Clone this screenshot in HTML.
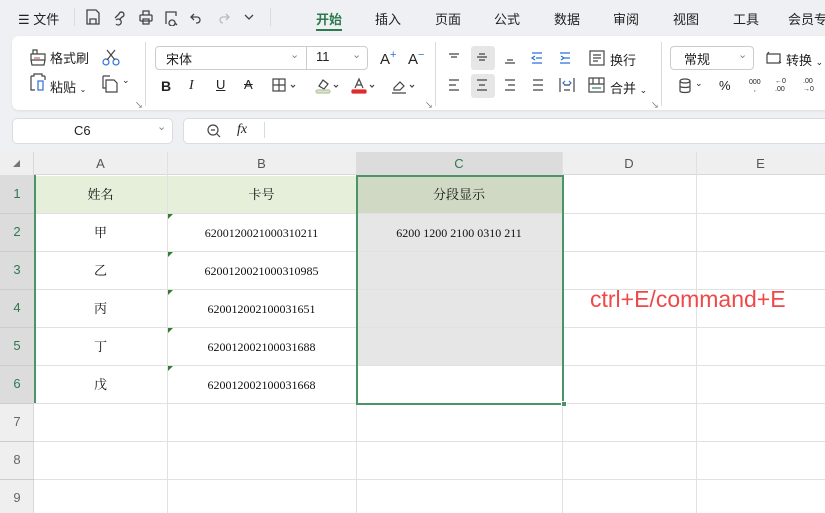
<!DOCTYPE html>
<html><head><meta charset="utf-8">
<style>
*{margin:0;padding:0;box-sizing:border-box}
body{width:825px;height:513px;overflow:hidden;background:#eef0f3;font-family:"Liberation Sans","Noto Sans CJK SC",sans-serif;position:relative;color:#222}
.a{position:absolute;white-space:nowrap}
.t{font-size:13px}
.ic{position:absolute}
.sep{position:absolute;width:1px;background:#d8dadd}
.g{position:absolute;background:#e1e1e1}
.cell{position:absolute;font-family:"Liberation Serif","Noto Serif CJK SC",serif;font-size:12px;text-align:center;color:#111}
.rh{position:absolute;left:0;width:34px;text-align:center;font-size:13px;color:#666}
.ch{position:absolute;top:152px;height:23px;line-height:23px;text-align:center;font-size:13px;color:#555}
.tri{position:absolute;width:0;height:0;border-top:5px solid #2e7d32;border-right:5px solid transparent}
</style></head><body>
<div class="a t" style="left:18px;top:9px;font-size:13px">☰ 文件</div>
<div class="sep" style="left:74px;top:8px;height:18px"></div>
<svg class="ic" style="left:84px;top:8px" width="180" height="18" fill="none" stroke="#444" stroke-width="1.3">
<path d="M3 2h9l3 3v11H3z M6 16v-5h6v5"/>
<path d="M32 12a3 3 0 1 1 0 4 M31 10l4-4a2.5 2.5 0 1 1 3 3l-3 3"/>
<rect x="56" y="7" width="12" height="6" rx="1"/><path d="M59 7V3h6v4 M59 11h6v5h-6z"/>
<path d="M82 16V4h10v4 M88 12a3 3 0 1 0 .1 0 M91 15l2 2"/>
<path d="M110 6l-3 3 3 3 M107 9h6a3 3 0 0 1 0 6h-1"/>
<path d="M142 6l3 3-3 3 M145 9h-6a3 3 0 0 0 0 6" stroke="#bbb"/>
<path d="M161 7l4 4 4-4"/>
</svg>
<div class="sep" style="left:270px;top:8px;height:18px"></div>
<div class="a t" style="left:316px;top:9px;color:#2d7a4f;font-weight:bold">开始</div>
<div class="a" style="left:316px;top:29px;width:26px;height:2px;background:#2d7a4f"></div>
<div class="a t" style="left:375px;top:9px">插入</div>
<div class="a t" style="left:435px;top:9px">页面</div>
<div class="a t" style="left:494px;top:9px">公式</div>
<div class="a t" style="left:554px;top:9px">数据</div>
<div class="a t" style="left:613px;top:9px">审阅</div>
<div class="a t" style="left:673px;top:9px">视图</div>
<div class="a t" style="left:733px;top:9px">工具</div>
<div class="a t" style="left:788px;top:9px">会员专</div>
<div class="a" style="left:12px;top:36px;width:830px;height:74px;background:#fff;border-radius:7px;box-shadow:0 1px 2px rgba(0,0,0,.08)"></div>
<svg class="ic" style="left:28px;top:46px" width="120" height="50" fill="none" stroke="#444" stroke-width="1.2">
<path d="M3 14h14v-6H3z M5 8V4h4v4 M3 14l1 5h12l1-5" /><path d="M6 12h6" stroke="#c66"/>
<circle cx="78" cy="16" r="3" stroke="#2b6fd6"/><circle cx="88" cy="16" r="3" stroke="#2b6fd6"/><path d="M79 14l8-10 M87 14l-8-10"/>
<path d="M3 30h3v-2h8v2h3 M3 30v14h4 M17 30v4" /><rect x="10" y="35" width="5" height="9" stroke="#2b6fd6"/>
<path d="M75 30h7 M75 30v12h3 M78 34h8l3 3v9h-11z"/>
</svg>
<div class="a t" style="left:50px;top:48px">格式刷</div>
<div class="a t" style="left:50px;top:77px">粘贴 <span style="font-size:8px">⌄</span></div>
<div class="a" style="left:122px;top:75px;font-size:9px">⌄</div>
<div class="a" style="left:135px;top:100px;font-size:8px;color:#666">↘</div>
<div class="sep" style="left:145px;top:42px;height:64px"></div>
<div class="a" style="left:155px;top:46px;width:213px;height:24px;border:1px solid #ccc;border-radius:4px"></div>
<div class="sep" style="left:306px;top:47px;height:22px;background:#ccc"></div>
<div class="a t" style="left:166px;top:49px">宋体</div>
<div class="a" style="left:290px;top:48px;font-size:11px;color:#888">⌄</div>
<div class="a t" style="left:316px;top:49px">11</div>
<div class="a" style="left:352px;top:48px;font-size:11px;color:#888">⌄</div>
<div class="a" style="left:380px;top:49px;font-size:15px">A<sup style="color:#2b6fd6;font-size:11px">+</sup></div>
<div class="a" style="left:408px;top:49px;font-size:15px">A<sup style="color:#2b6fd6;font-size:11px">−</sup></div>
<div class="a" style="left:161px;top:78px;font-size:14px;font-weight:bold">B</div>
<div class="a" style="left:189px;top:78px;font-size:14px;font-style:italic;font-family:'Liberation Serif',serif">I</div>
<div class="a" style="left:216px;top:77px;font-size:13px;text-decoration:underline">U</div>
<div class="a" style="left:244px;top:77px;font-size:13px;text-decoration:line-through">A</div>
<svg class="ic" style="left:272px;top:76px" width="160" height="20" fill="none" stroke="#444" stroke-width="1.2">
<rect x="1" y="3" width="12" height="12"/><path d="M7 3v12 M1 9h12"/><path d="M19 9l2 2 2-2"/>
<path d="M47 10l4-6 5 4-4 5z"/><rect x="44" y="14" width="14" height="3" rx="1.5" fill="#d9e6cc" stroke="#b5c7a3"/><path d="M62 9l2 2 2-2"/>
<path d="M83 12l4-9 4 9 M85 9h4"/><rect x="80" y="14" width="14" height="3" rx="1" fill="#e02c2c" stroke="#e02c2c"/><path d="M98 9l2 2 2-2"/>
<path d="M122 12l6-6 4 4-4 4h-6z M120 17h14"/><path d="M138 9l2 2 2-2"/>
</svg>
<div class="a" style="left:425px;top:100px;font-size:8px;color:#666">↘</div>
<div class="sep" style="left:435px;top:42px;height:64px"></div>
<div class="a" style="left:471px;top:46px;width:24px;height:24px;background:#e6e6e6;border-radius:3px"></div>
<div class="a" style="left:471px;top:74px;width:24px;height:24px;background:#e6e6e6;border-radius:3px"></div>
<svg class="ic" style="left:444px;top:48px" width="200" height="50" fill="none" stroke="#444" stroke-width="1.2">
<path d="M5 6h10 M7 9h6"/><path d="M33 9h10 M35 12h6 M35 6h6"/><path d="M61 15h10 M63 12h6"/>
<path d="M88 5h10 M92 10h6 M88 15h10 M91 8l-3 2 3 2" stroke="#2b6fd6"/>
<path d="M116 5h10 M120 10h6 M116 15h10 M117 8l3 2-3 2" stroke="#2b6fd6"/>
<rect x="146" y="3" width="14" height="14"/><path d="M149 7h8 M149 10h8 M149 13h5"/>
<path d="M5 32h10 M5 37h7 M5 42h10"/><path d="M33 32h10 M35 37h6 M33 42h10"/><path d="M61 32h10 M64 37h7 M61 42h10"/><path d="M89 32h10 M89 37h10 M89 42h10"/>
<path d="M116 30v14 M130 30v14 M120 42h6 M120 37h6"/><path d="M121 33l-2 2 2 2 M125 33l2 2-2 2" stroke="#2b6fd6"/>
<rect x="145" y="30" width="15" height="14"/><path d="M145 36h15 M149 30v6 M155 30v6"/><path d="M148 40h9" stroke="#2d7a4f"/>
</svg>
<div class="a t" style="left:610px;top:50px">换行</div>
<div class="a t" style="left:610px;top:78px">合并 <span style="font-size:9px">⌄</span></div>
<div class="a" style="left:651px;top:100px;font-size:8px;color:#666">↘</div>
<div class="sep" style="left:661px;top:42px;height:64px"></div>
<div class="a" style="left:670px;top:46px;width:84px;height:24px;border:1px solid #ccc;border-radius:4px"></div>
<div class="a t" style="left:684px;top:49px">常规</div>
<div class="a" style="left:738px;top:48px;font-size:11px;color:#888">⌄</div>
<svg class="ic" style="left:764px;top:49px" width="20" height="18" fill="none" stroke="#444" stroke-width="1.2"><path d="M3 5h13v9 M17 14l-2-2 M3 5l2-2 M16 14H3V5"/></svg>
<div class="a t" style="left:786px;top:50px">转换 <span style="font-size:9px">⌄</span></div>
<svg class="ic" style="left:678px;top:78px" width="15" height="16" fill="none" stroke="#444" stroke-width="1.2"><ellipse cx="7" cy="3" rx="5" ry="2"/><path d="M2 3v10c0 2 10 2 10 0V3 M2 8c0 2 10 2 10 0"/></svg>
<div class="a" style="left:695px;top:78px;font-size:9px">⌄</div>
<div class="a" style="left:719px;top:78px;font-size:13px">%</div>
<div class="a" style="left:749px;top:79px;font-size:7px;line-height:7px;text-align:center">000<br>,</div>
<div class="a" style="left:775px;top:78px;font-size:7px;line-height:8px">←0<br>.00</div>
<div class="a" style="left:803px;top:78px;font-size:7px;line-height:8px">.00<br>→0</div>
<div class="a" style="left:12px;top:118px;width:161px;height:26px;background:#fff;border-radius:5px;border:1px solid #dcdcdc"></div>
<div class="a t" style="left:74px;top:123px">C6</div>
<div class="a" style="left:157px;top:120px;font-size:11px;color:#888">⌄</div>
<div class="a" style="left:183px;top:118px;width:660px;height:26px;background:#fff;border-radius:5px;border:1px solid #dcdcdc"></div>
<svg class="ic" style="left:206px;top:123px" width="16" height="16" fill="none" stroke="#444" stroke-width="1.2"><circle cx="7" cy="7" r="5"/><path d="M5 7h4 M11 11l3 3"/></svg>
<div class="a" style="left:237px;top:122px;font-size:14px;font-style:italic;font-family:'Liberation Serif',serif">fx</div>
<div class="sep" style="left:264px;top:122px;height:16px"></div>
<div class="a" style="left:0;top:152px;width:825px;height:361px;background:#fff"></div>
<div class="a" style="left:0;top:152px;width:825px;height:23px;background:#efefef;border-bottom:1px solid #d8d8d8"></div>
<div class="a" style="left:0;top:152px;width:34px;height:361px;background:#efefef;border-right:1px solid #d8d8d8"></div>
<div class="a" style="left:0;top:175px;width:34px;height:228px;background:#dcdcdc"></div>
<div class="a" style="left:356px;top:152px;width:206px;height:23px;background:#dcdcdc"></div>
<div class="a" style="left:13px;top:160px;width:0;height:0;border-left:7px solid transparent;border-bottom:7px solid #777"></div>
<div class="a" style="left:35px;top:176px;width:321px;height:37px;background:#e5efd9"></div>
<div class="a" style="left:357px;top:176px;width:205px;height:37px;background:#cfd9c3"></div>
<div class="a" style="left:357px;top:214px;width:205px;height:151px;background:#e6e6e6"></div>
<div class="g" style="left:167px;top:152px;width:1px;height:361px"></div>
<div class="g" style="left:356px;top:175px;width:1px;height:338px"></div>
<div class="g" style="left:562px;top:152px;width:1px;height:361px"></div>
<div class="g" style="left:696px;top:152px;width:1px;height:361px"></div>
<div class="g" style="left:34px;top:213px;width:791px;height:1px"></div>
<div class="g" style="left:34px;top:251px;width:791px;height:1px"></div>
<div class="g" style="left:34px;top:289px;width:791px;height:1px"></div>
<div class="g" style="left:34px;top:327px;width:791px;height:1px"></div>
<div class="g" style="left:34px;top:365px;width:791px;height:1px"></div>
<div class="g" style="left:34px;top:403px;width:791px;height:1px"></div>
<div class="g" style="left:34px;top:441px;width:791px;height:1px"></div>
<div class="g" style="left:34px;top:479px;width:791px;height:1px"></div>
<div class="g" style="left:0;top:213px;width:34px;height:1px;background:#ccc"></div>
<div class="g" style="left:0;top:251px;width:34px;height:1px;background:#ccc"></div>
<div class="g" style="left:0;top:289px;width:34px;height:1px;background:#ccc"></div>
<div class="g" style="left:0;top:327px;width:34px;height:1px;background:#ccc"></div>
<div class="g" style="left:0;top:365px;width:34px;height:1px;background:#ccc"></div>
<div class="g" style="left:0;top:441px;width:34px;height:1px;background:#ccc"></div>
<div class="g" style="left:0;top:479px;width:34px;height:1px;background:#ccc"></div>
<div class="g" style="left:0;top:403px;width:34px;height:1px;background:#ccc"></div>
<div class="a" style="left:34px;top:175px;width:2px;height:228px;background:#4a9467"></div>
<div class="ch" style="left:34px;width:133px">A</div>
<div class="ch" style="left:167px;width:189px">B</div>
<div class="ch" style="left:356px;width:206px;color:#2d7a4f">C</div>
<div class="ch" style="left:562px;width:134px">D</div>
<div class="ch" style="left:696px;width:129px">E</div>
<div class="rh" style="top:186px;color:#2d7a4f">1</div>
<div class="rh" style="top:224px;color:#2d7a4f">2</div>
<div class="rh" style="top:262px;color:#2d7a4f">3</div>
<div class="rh" style="top:300px;color:#2d7a4f">4</div>
<div class="rh" style="top:338px;color:#2d7a4f">5</div>
<div class="rh" style="top:376px;color:#2d7a4f">6</div>
<div class="rh" style="top:414px">7</div>
<div class="rh" style="top:452px">8</div>
<div class="rh" style="top:490px">9</div>
<div class="cell" style="left:34px;width:133px;top:184px;font-size:13px">姓名</div>
<div class="cell" style="left:167px;width:189px;top:184px;font-size:13px">卡号</div>
<div class="cell" style="left:356px;width:206px;top:184px;font-size:13px">分段显示</div>
<div class="cell" style="left:34px;width:133px;top:222px;font-size:13px">甲</div>
<div class="cell" style="left:34px;width:133px;top:260px;font-size:13px">乙</div>
<div class="cell" style="left:34px;width:133px;top:298px;font-size:13px">丙</div>
<div class="cell" style="left:34px;width:133px;top:336px;font-size:13px">丁</div>
<div class="cell" style="left:34px;width:133px;top:374px;font-size:13px">戊</div>
<div class="cell" style="left:167px;width:189px;top:226px">6200120021000310211</div>
<div class="cell" style="left:167px;width:189px;top:264px">6200120021000310985</div>
<div class="cell" style="left:167px;width:189px;top:302px">620012002100031651</div>
<div class="cell" style="left:167px;width:189px;top:340px">620012002100031688</div>
<div class="cell" style="left:167px;width:189px;top:378px">620012002100031668</div>
<div class="cell" style="left:356px;width:206px;top:226px">6200 1200 2100 0310 211</div>
<div class="tri" style="left:168px;top:214px"></div>
<div class="tri" style="left:168px;top:252px"></div>
<div class="tri" style="left:168px;top:290px"></div>
<div class="tri" style="left:168px;top:328px"></div>
<div class="tri" style="left:168px;top:366px"></div>
<div class="a" style="left:356px;top:175px;width:208px;height:230px;border:2px solid #4a9467"></div>
<div class="a" style="left:561px;top:401px;width:6px;height:6px;background:#4a9467;border:1px solid #fff"></div>
<div class="a" style="left:590px;top:286px;font-size:23px;color:#f04848;font-family:'Liberation Sans',sans-serif">ctrl+E/command+E</div>
</body></html>
